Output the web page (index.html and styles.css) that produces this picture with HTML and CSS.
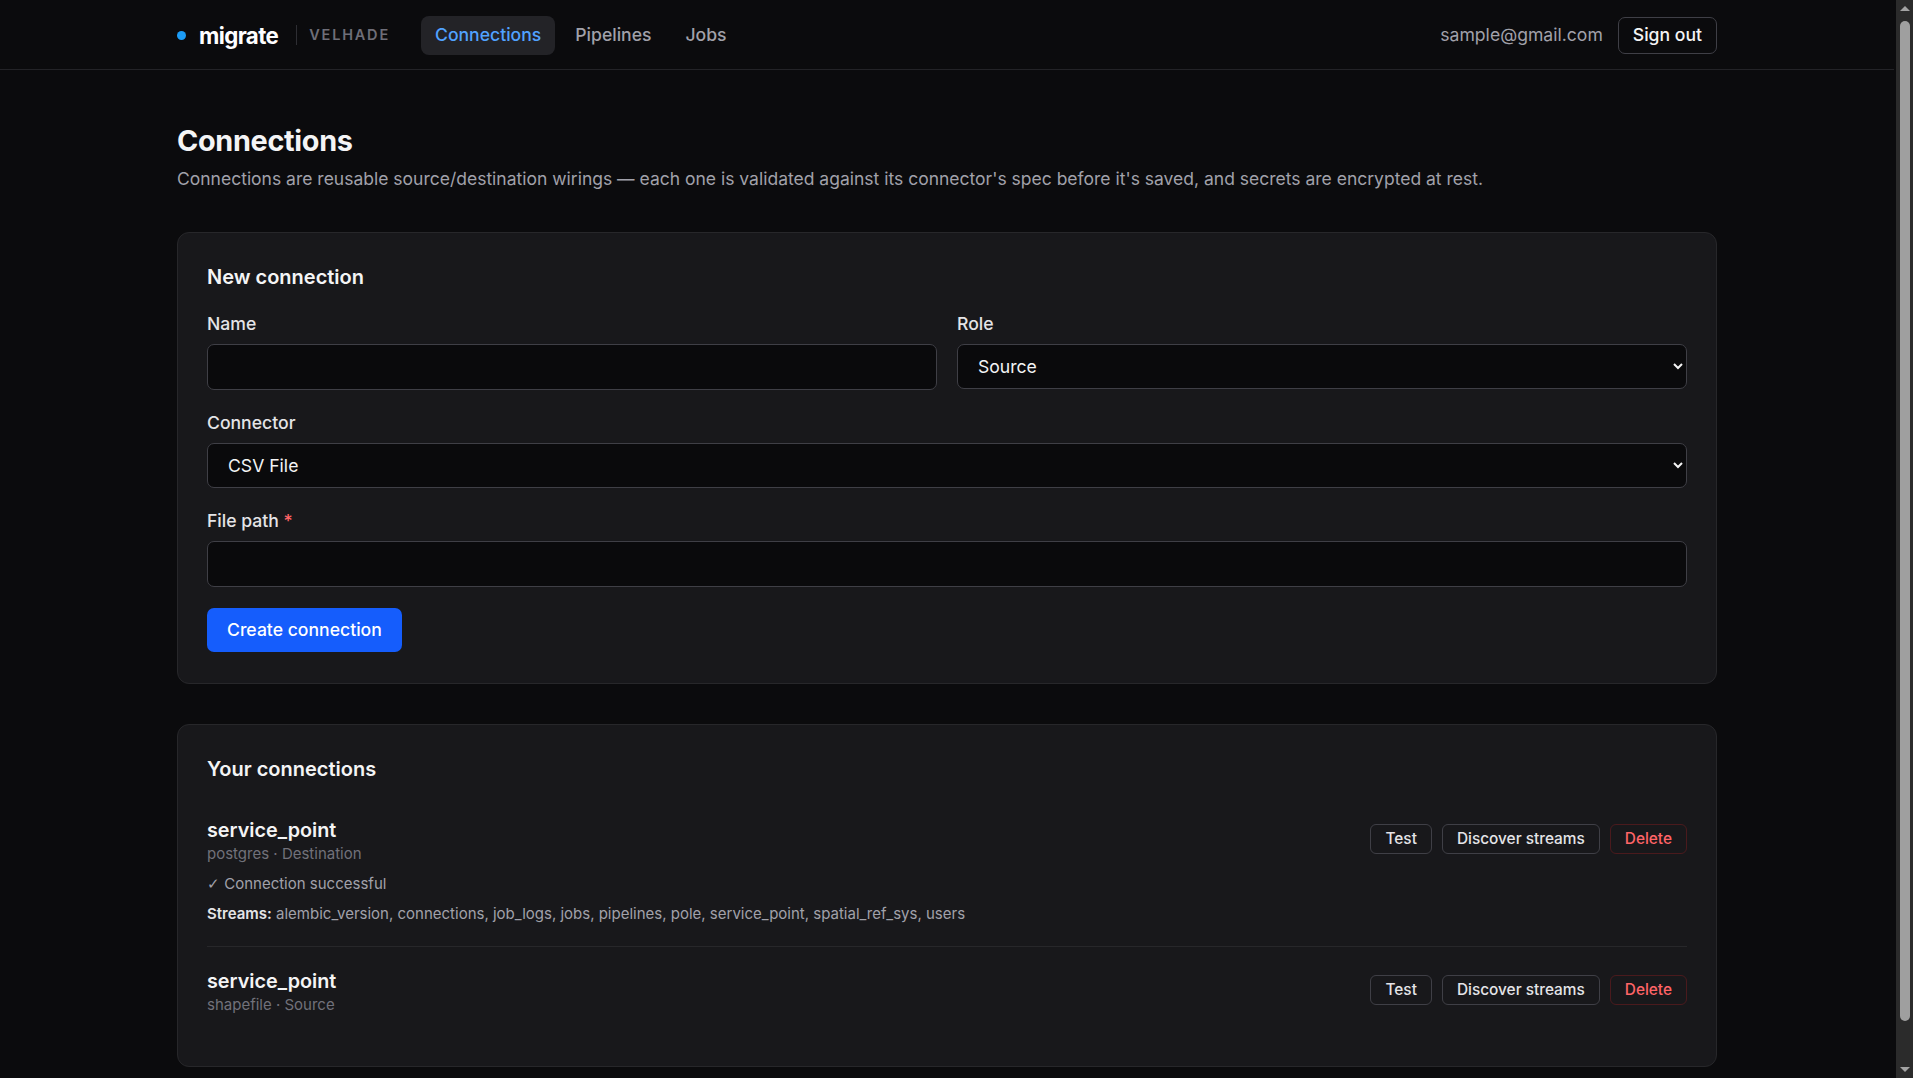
FILE: index.html
```html
<!DOCTYPE html>
<html lang="en">
<head>
<meta charset="utf-8">
<title>Connections · migrate</title>
<link rel="stylesheet" href="styles.css">
</head>
<body>
<header class="topbar">
  <div class="topbar-inner">
    <div class="brand-nav">
      <div class="brand">
        <span class="brand-dot"></span>
        <span class="brand-name">migrate</span>
        <span class="brand-sep"></span>
        <span class="brand-org">VELHADE</span>
      </div>
      <nav class="nav">
        <a class="nav-link active">Connections</a>
        <a class="nav-link">Pipelines</a>
        <a class="nav-link">Jobs</a>
      </nav>
    </div>
    <div class="account">
      <span class="email">sample@gmail.com</span>
      <button class="btn-outline">Sign out</button>
    </div>
  </div>
</header>

<main class="page">
  <h1 class="page-title">Connections</h1>
  <p class="page-desc">Connections are reusable source/destination wirings — each one is validated against its connector's spec before it's saved, and secrets are encrypted at rest.</p>

  <section class="card">
    <h2 class="card-title">New connection</h2>
    <form class="form">
      <div class="form-row">
        <div class="field">
          <label class="label">Name</label>
          <input class="input" type="text">
        </div>
        <div class="field">
          <label class="label">Role</label>
          <select class="input select">
            <option>Source</option>
            <option>Destination</option>
          </select>
        </div>
      </div>
      <div class="field">
        <label class="label">Connector</label>
        <select class="input select">
          <option>CSV File</option>
        </select>
      </div>
      <div class="field">
        <label class="label">File path <span class="req">*</span></label>
        <input class="input" type="text">
      </div>
      <div>
        <button type="button" class="btn-primary">Create connection</button>
      </div>
    </form>
  </section>

  <section class="card card-list">
    <h2 class="card-title list-title">Your connections</h2>
    <div class="conn">
      <div class="conn-head">
        <div>
          <div class="conn-name">service_point</div>
          <div class="conn-meta">postgres · Destination</div>
        </div>
        <div class="conn-actions">
          <button class="btn-sm">Test</button>
          <button class="btn-sm">Discover streams</button>
          <button class="btn-sm danger">Delete</button>
        </div>
      </div>
      <div class="conn-status"><span class="check">✓</span> Connection successful</div>
      <div class="conn-streams"><strong>Streams:</strong> alembic_version, connections, job_logs, jobs, pipelines, pole, service_point, spatial_ref_sys, users</div>
    </div>
    <div class="conn">
      <div class="conn-head">
        <div>
          <div class="conn-name">service_point</div>
          <div class="conn-meta">shapefile · Source</div>
        </div>
        <div class="conn-actions">
          <button class="btn-sm">Test</button>
          <button class="btn-sm">Discover streams</button>
          <button class="btn-sm danger">Delete</button>
        </div>
      </div>
    </div>
  </section>
</main>

<div class="fake-scrollbar" aria-hidden="true">
  <span class="sb-arrow up"></span>
  <span class="sb-thumb"></span>
  <span class="sb-arrow down"></span>
</div>
</body>
</html>
```

FILE: styles.css
```css
* { box-sizing: border-box; }

html { color-scheme: dark; }

body {
  margin: 0;
  padding-right: 19px;
  background: #0b0b0d;
  color: #f4f4f5;
  font-family: Inter, "Noto Sans", "Liberation Sans", sans-serif;
  font-size: 17.6px;
  line-height: 1.4;
}

.topbar {
  border-bottom: 1px solid #232327;
}

.topbar-inner {
  max-width: 1540px;
  margin: 0 auto;
  height: 69px;
  padding-top: 2px;
  display: flex;
  align-items: center;
  justify-content: space-between;
}

.brand-nav {
  display: flex;
  align-items: center;
}

.brand {
  display: flex;
  align-items: center;
}

.brand-dot {
  width: 9px;
  height: 9px;
  border-radius: 50%;
  background: #1c9cf6;
  margin-right: 13px;
}

.brand-name {
  font-size: 22.3px;
  font-weight: 700;
  letter-spacing: -0.6px;
  color: #ffffff;
}

.brand-sep {
  width: 1px;
  height: 20px;
  background: #2e2e33;
  margin: 0 12px 0 18px;
}

.brand-org {
  font-size: 14.5px;
  font-weight: 600;
  letter-spacing: 1.8px;
  color: #6e6e78;
}

.nav {
  display: flex;
  gap: 6px;
  margin-left: 31px;
}

.nav-link {
  display: inline-flex;
  align-items: center;
  height: 39px;
  padding: 0 14px;
  border-radius: 8px;
  color: #a1a1aa;
  font-weight: 500;
  cursor: pointer;
}

.nav-link.active {
  background: #232327;
  color: #51a2ff;
}

.account {
  display: flex;
  align-items: center;
  gap: 15px;
}

.email {
  color: #a1a1aa;
}

.btn-outline {
  height: 37px;
  padding: 0 14px;
  background: transparent;
  border: 1px solid #3f3f46;
  border-radius: 7px;
  color: #f4f4f5;
  font: inherit;
  font-weight: 500;
}

.page {
  max-width: 1540px;
  margin: 0 auto;
  padding: 54px 0 60px;
}

.page-title {
  margin: 0;
  font-size: 28.8px;
  line-height: 34px;
  font-weight: 700;
  letter-spacing: -0.3px;
}

.page-desc {
  margin: 9px 0 0;
  font-size: 17.5px;
  line-height: 24px;
  color: #a1a1aa;
}

.card {
  margin-top: 41px;
  background: #18181b;
  border: 1px solid #27272a;
  border-radius: 12px;
  padding: 30px 29px 31px;
}

.card-list {
  margin-top: 40px;
  padding-bottom: 30px;
}

.card-title {
  margin: 0 0 21px;
  font-size: 20px;
  line-height: 28px;
  font-weight: 600;
}

.form {
  display: flex;
  flex-direction: column;
  gap: 21px;
}

.form-row {
  display: grid;
  grid-template-columns: 1fr 1fr;
  gap: 20px;
}

.field {
  display: flex;
  flex-direction: column;
}

.label {
  font-weight: 500;
  line-height: 24px;
  margin-bottom: 8px;
  color: #e4e4e7;
}

.req {
  color: #ff6467;
}

.input {
  height: 46px;
  width: 100%;
  background: #0a0a0c;
  border: 1px solid #3f3f46;
  border-radius: 7px;
  padding: 0 20px;
  color: #f4f4f5;
  font: inherit;
  outline: none;
}

.select {
  height: 45px;
  padding-left: 16px;
}

.btn-primary {
  height: 44px;
  padding: 0 20px;
  background: #155dfc;
  border: none;
  border-radius: 7px;
  color: #ffffff;
  font: inherit;
  font-weight: 500;
}

.list-title {
  margin-bottom: 13px;
}

.conn {
  padding: 21px 0;
  border-bottom: 1px solid #27272a;
}

.conn:last-child {
  border-bottom: none;
  padding-bottom: 20px;
}

.conn-head {
  display: flex;
  align-items: center;
  justify-content: space-between;
}

.conn-name {
  font-size: 19.8px;
  line-height: 26px;
  font-weight: 600;
}

.conn-meta {
  font-size: 15px;
  line-height: 22px;
  color: #71717a;
}

.conn-actions {
  display: flex;
  gap: 10px;
  margin-bottom: 4px;
}

.btn-sm {
  height: 30px;
  padding: 0 14px;
  background: transparent;
  border: 1px solid #3f3f46;
  border-radius: 6px;
  color: #e4e4e7;
  font: inherit;
  font-size: 15.4px;
  font-weight: 500;
}

.btn-sm.danger {
  color: #ff6467;
  border-color: #4a1a1d;
}

.conn-status {
  margin-top: 8px;
  font-size: 15px;
  line-height: 22px;
  color: #a1a1aa;
}

.check {
  font-family: "Liberation Sans", sans-serif;
  font-weight: 300;
}

.conn-streams {
  margin-top: 8px;
  font-size: 15px;
  line-height: 22px;
  color: #a1a1aa;
}

.conn-streams strong {
  color: #e4e4e7;
  font-weight: 600;
}

.fake-scrollbar {
  position: fixed;
  top: 0;
  right: 0;
  width: 17px;
  height: 100vh;
  background: #2b2b2b;
}

.sb-thumb {
  position: absolute;
  left: 4px;
  top: 21px;
  width: 10px;
  height: 1000px;
  border-radius: 5px;
  background: #9f9f9f;
}

.sb-arrow {
  position: absolute;
  left: 4px;
  width: 0;
  height: 0;
  border-left: 5px solid transparent;
  border-right: 5px solid transparent;
}

.sb-arrow.up {
  top: 6px;
  border-bottom: 5px solid #a3a3a3;
}

.sb-arrow.down {
  bottom: 6px;
  border-top: 5px solid #a3a3a3;
}
```
